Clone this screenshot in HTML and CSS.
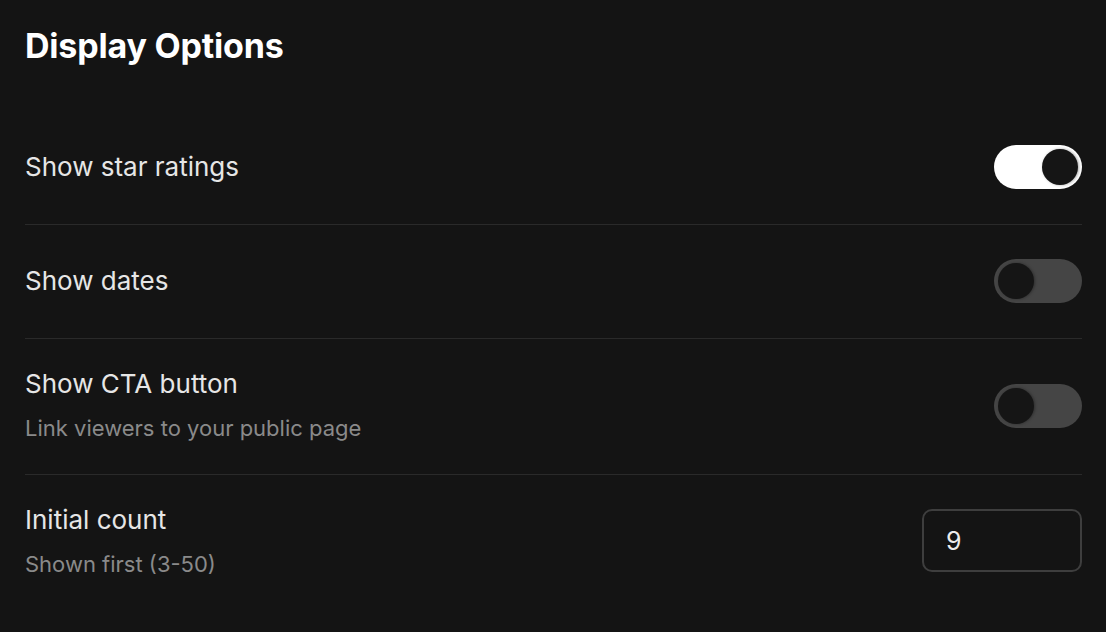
FILE: index.html
```html
<!DOCTYPE html>
<html lang="en">
<head>
<meta charset="utf-8">
<title>Display Options</title>
<link rel="stylesheet" href="styles.css">
</head>
<body>
<div class="panel">
  <h1 class="title">Display Options</h1>
  <div class="list">
    <div class="row">
      <div class="text">
        <div class="label">Show star ratings</div>
      </div>
      <div class="toggle on"><span class="knob"></span></div>
    </div>
    <div class="row">
      <div class="text">
        <div class="label">Show dates</div>
      </div>
      <div class="toggle"><span class="knob"></span></div>
    </div>
    <div class="row">
      <div class="text">
        <div class="label">Show CTA button</div>
        <div class="sub">Link viewers to your public page</div>
      </div>
      <div class="toggle"><span class="knob"></span></div>
    </div>
    <div class="row">
      <div class="text">
        <div class="label">Initial count</div>
        <div class="sub">Shown first (3-50)</div>
      </div>
      <div class="field">9</div>
    </div>
  </div>
</div>
</body>
</html>
```

FILE: styles.css
```css
html, body {
  margin: 0;
  padding: 0;
  background: #141414;
}
body {
  font-family: Inter, "Liberation Sans", sans-serif;
  color: #e8e8e8;
  height: 632px;
  overflow: hidden;
}
.panel {
  padding: 26px 24px 0 25px;
}
.title {
  margin: 0 0 45px 0;
  font-size: 34px;
  line-height: 40px;
  font-weight: 700;
  color: #ffffff;
  letter-spacing: -0.2px;
}
.list {
  display: flex;
  flex-direction: column;
}
.row {
  display: flex;
  align-items: center;
  justify-content: space-between;
  padding: 34px 0 35px 0;
  border-bottom: 1px solid #2a2a2a;
}
.row:last-child {
  border-bottom: none;
}
.text {
  display: flex;
  flex-direction: column;
  gap: 23px;
}
.label {
  font-size: 26px;
  line-height: 22px;
  color: #e6e6e6;
}
.sub {
  font-size: 22px;
  line-height: 21px;
  color: #8a8a8a;
}
.toggle {
  width: 88px;
  height: 44px;
  border-radius: 22px;
  background: #454545;
  display: flex;
  align-items: center;
  padding: 0 4px;
  box-sizing: border-box;
  justify-content: flex-start;
}
.toggle.on {
  background: #ffffff;
  justify-content: flex-end;
}
.knob {
  width: 36px;
  height: 36px;
  border-radius: 50%;
  background: #151515;
  box-shadow: 1px 0 3px rgba(0, 0, 0, 0.35);
}
.field {
  align-self: flex-start;
  width: 160px;
  height: 63px;
  box-sizing: border-box;
  border: 2px solid #3e3e3e;
  border-radius: 10px;
  padding-left: 22px;
  display: flex;
  align-items: center;
  font-size: 25px;
  color: #ececec;
}
```
